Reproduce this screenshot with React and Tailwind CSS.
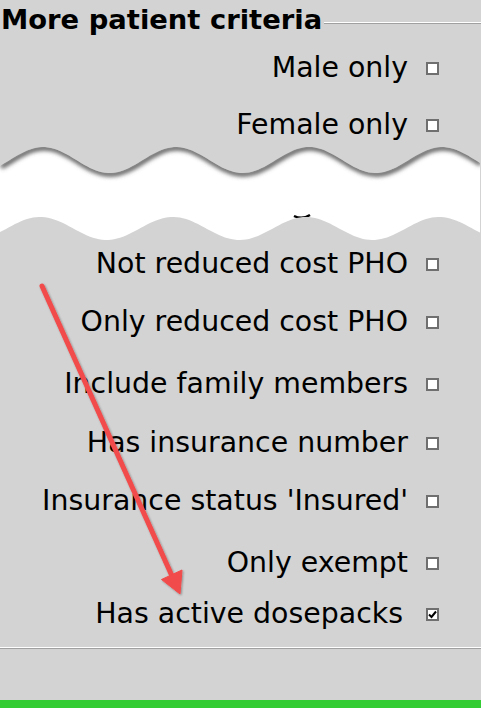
import React from 'react';

const rows = [
  { label: 'Not reduced cost PHO', mt: 'mt-0' },
  { label: 'Only reduced cost PHO', mt: 'mt-[26px]' },
  { label: 'Include family members', mt: 'mt-[30px]' },
  { label: 'Has insurance number', mt: 'mt-[27px]' },
  { label: "Insurance status 'Insured'", mt: 'mt-[26px]' },
  { label: 'Only exempt', mt: 'mt-[30px]' },
];

function Checkbox({ checked }) {
  return (
    <span className="w-[13px] h-[13px] border-2 border-[#6f6f6f] bg-white flex items-center justify-center shrink-0">
      {checked && (
        <svg width="9" height="9" viewBox="0 0 9 9">
          <path d="M1 4.5 L3.5 7 L8 1.5" fill="none" stroke="#000" strokeWidth="2" />
        </svg>
      )}
    </span>
  );
}

function Row({ label, checked, mt, gap = 'gap-[18px]' }) {
  return (
    <div className={`${mt} h-[32px] flex items-center justify-end pr-[42px] ${gap}`}>
      <span className="text-[28.4px] leading-[32px] text-black whitespace-nowrap">{label}</span>
      <Checkbox checked={checked} />
    </div>
  );
}

// torn-paper cut between the two groups of rows
function Torn() {
  const period = 133;
  const top = [];
  const bottom = [];
  for (let x = 0; x <= 481; x += 3) {
    top.push([x, 19 - 13 * Math.cos((2 * Math.PI * (x - 43)) / period)]);
    bottom.push([x, 87.5 - 11.5 * Math.cos((2 * Math.PI * (x - 40)) / period)]);
  }
  const topD = top.map((p, i) => `${i ? 'L' : 'M'}${p[0]} ${p[1].toFixed(1)}`).join(' ');
  const fillD =
    topD +
    ' ' +
    bottom
      .slice()
      .reverse()
      .map((p) => `L${p[0]} ${p[1].toFixed(1)}`)
      .join(' ') +
    ' Z';
  return (
    <svg width="481" height="107" viewBox="0 0 481 107" className="block">
      <defs>
        <clipPath id="tear">
          <path d={fillD} />
        </clipPath>
        <filter id="blur" x="-5%" y="-50%" width="110%" height="200%">
          <feGaussianBlur stdDeviation="2.2" />
        </filter>
      </defs>
      <path d={fillD} fill="#fff" />
      <g clipPath="url(#tear)">
        <path d={topD} transform="translate(1 1)" fill="none" stroke="#5a5a5a" strokeWidth="5" filter="url(#blur)" />
      </g>
      <path d="M294 75 q8 4 16 -1" fill="none" stroke="#000" strokeWidth="2.5" clipPath="url(#tear)" />
    </svg>
  );
}

export default function App() {
  return (
    <div
      className="relative w-[481px] h-[708px] bg-[#d3d3d3] overflow-hidden flex flex-col"
      style={{ fontFamily: '"DejaVu Sans", Verdana, sans-serif' }}
    >
      <div className="pt-[4px] flex items-start">
        <h1 className="text-[27.4px] leading-[32px] font-bold text-black whitespace-nowrap pl-[1px]">
          More patient criteria
        </h1>
        <div className="flex-1 mt-[18px] ml-[2px] border-t border-t-white border-b border-b-[#a0a0a0]" />
      </div>

      <Row label="Male only" mt="mt-[16px]" />
      <Row label="Female only" mt="mt-[25px]" />

      <Torn />

      {rows.map((r) => (
        <Row key={r.label} label={r.label} mt={r.mt} />
      ))}
      <Row label="Has active dosepacks" mt="mt-[19px]" gap="gap-[23px]" checked />

      <div className="mt-[17px] border-t border-t-white border-b border-b-[#a0a0a0]" />

      <div className="flex-1" />
      <div className="h-[8px] bg-[#33cc33] overflow-hidden">
        <div className="mt-[6px] pl-[10px] text-[28px] leading-[32px] font-bold text-white whitespace-nowrap">
          Include hidden patients
        </div>
      </div>

      {/* annotation arrow */}
      <svg className="absolute left-0 top-0 pointer-events-none" width="481" height="708">
        <defs>
          <filter id="ash" x="-20%" y="-20%" width="140%" height="140%">
            <feDropShadow dx="1" dy="1" stdDeviation="1" floodColor="#000" floodOpacity="0.35" />
          </filter>
        </defs>
        <g filter="url(#ash)" fill="#f24b4b" stroke="#f24b4b">
          <line x1="42" y1="286" x2="172" y2="576" strokeWidth="5" strokeLinecap="round" />
          <polygon points="180,594 161.5,579.5 182,570" strokeWidth="1" strokeLinejoin="round" />
        </g>
      </svg>
    </div>
  );
}
